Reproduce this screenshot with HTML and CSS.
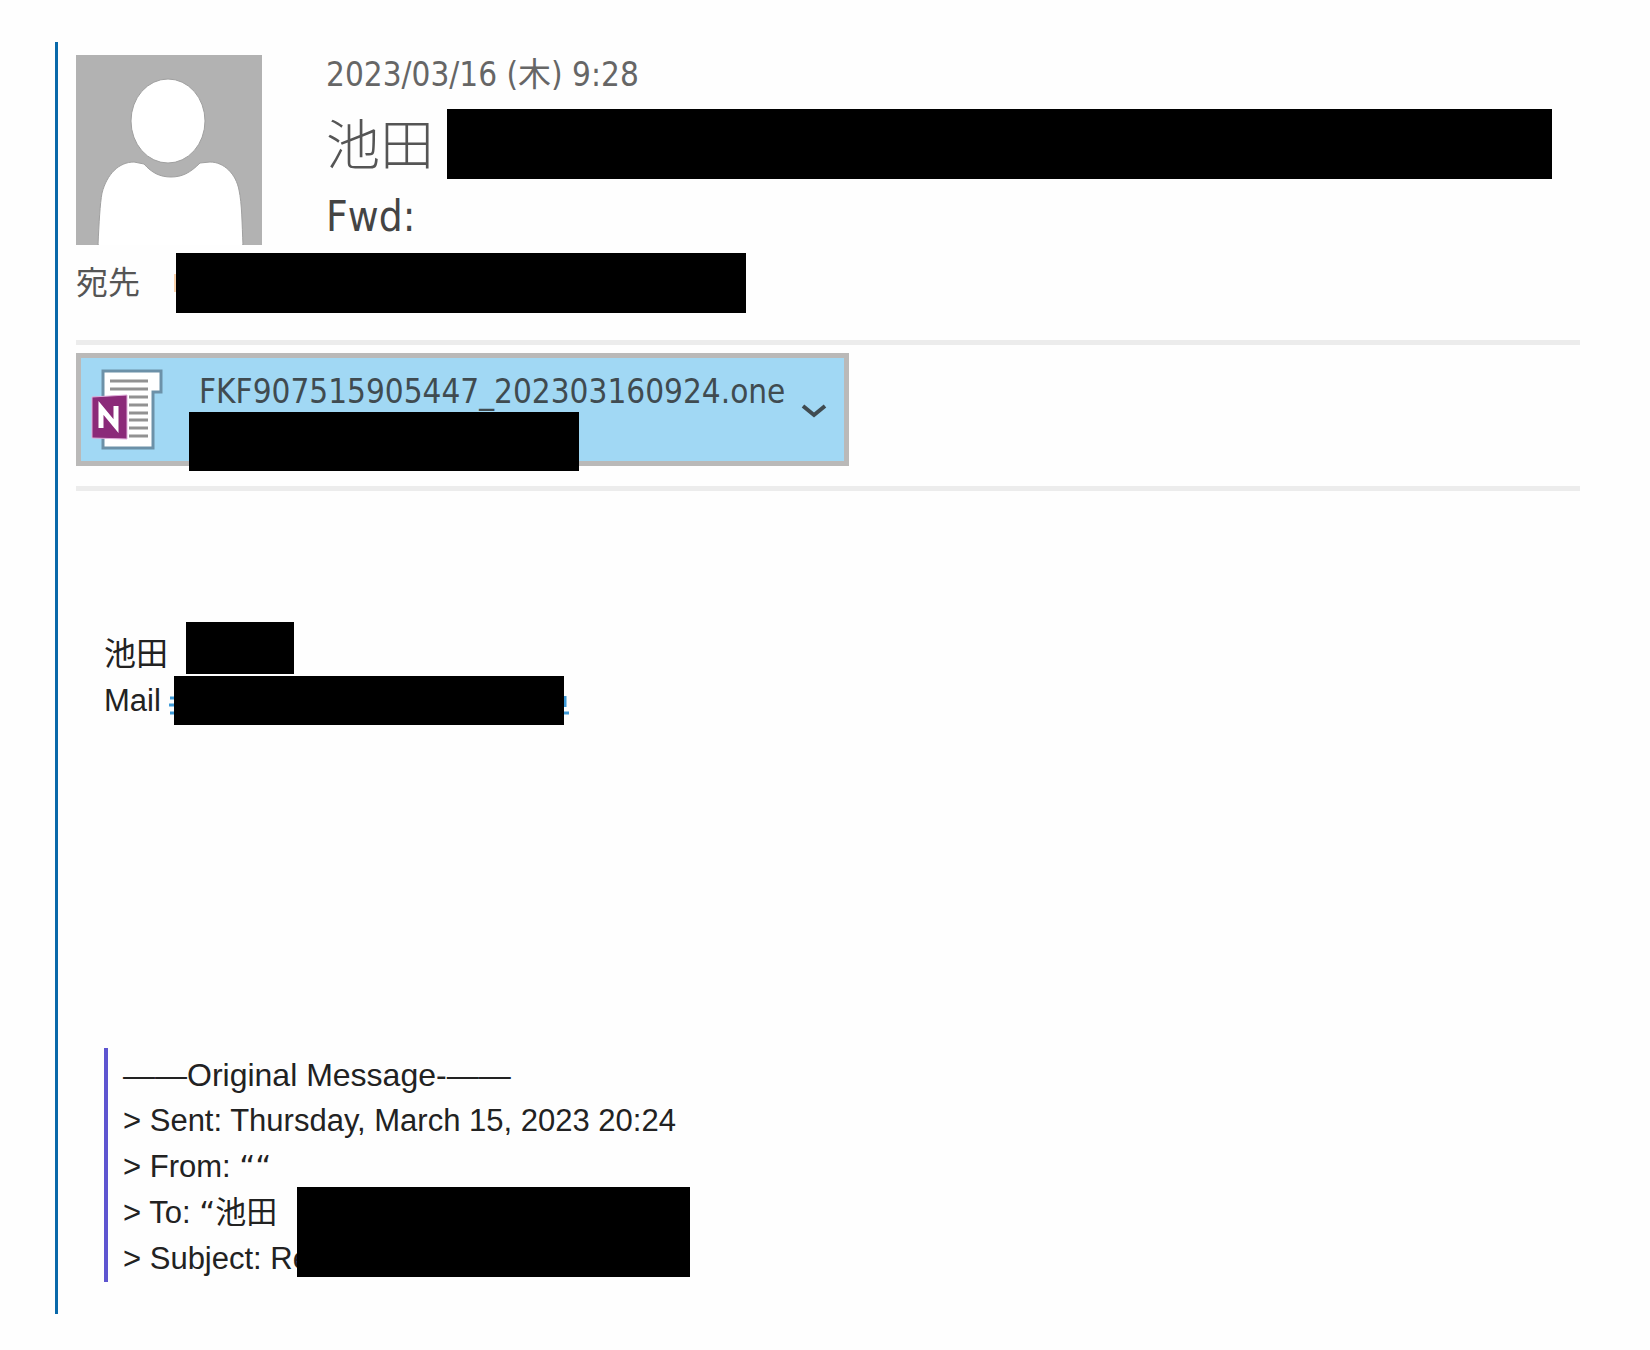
FILE: index.html
```html
<!DOCTYPE html>
<html lang="ja">
<head>
    <meta charset="UTF-8">
    <meta name="viewport" content="width=device-width, initial-scale=1.0">
    <title>Fwd:</title>
    <link rel="stylesheet" href="styles.css">
</head>
<body>
    <main class="message">
        <header class="header">
            <svg class="avatar" viewBox="0 0 186 190" role="img" aria-label="池田">
                <rect width="186" height="190" fill="#b2b2b2"/>
                <ellipse cx="92" cy="66" rx="37" ry="42" fill="#fff" stroke="#a0a0a0"/>
                <path d="M22 190C23 168 24 149 26 138C31 119 43 107 58 107L68 109C76 118 84 122 95 122C106 122 114 118 124 108L134 107C148 107 160 119 163 135C166 149 166 169 167 190Z" fill="#fff" stroke="#a0a0a0"/>
                <path d="M23 189H166V190H23Z" fill="#fff"/>
            </svg>
            <div class="summary">
                <time class="date" datetime="2023-03-16T09:28">2023/03/16 (木) 9:28</time>
                <div class="sender">
                    <span class="sender-name">池田</span>
                    <span class="redacted"></span>
                </div>
                <h1 class="subject">Fwd:</h1>
            </div>
        </header>
        <div class="recipient">
            <span class="label">宛先</span>
            <svg class="recipient-start" viewBox="0 0 2 18" aria-hidden="true">
                <path d="M1 0V18" stroke="#fad2ac" stroke-width="2"/>
            </svg>
            <span class="redacted"></span>
        </div>

        <div class="attachments">
            <button class="attachment" type="button">
                <svg class="file-icon" viewBox="0 0 72 82" aria-hidden="true">
                    <path d="M12 3H70V24H62V80H12Z" fill="#fff" stroke="#6c91a8" stroke-width="3"/>
                    <path d="M19 13H57M19 21H57M38 29H57M38 37H57M38 45H57M38 52H57M38 60H57M38 68H57" stroke="#929292" stroke-width="3"/>
                    <path d="M1 29L36 27V71L1 70Z" fill="#8b2a79" stroke="#e0aedb"/>
                    <path d="M10 60V40L25 58V38" fill="none" stroke="#fff" stroke-width="5"/>
                </svg>
                <span class="file-name">FKF907515905447_202303160924.one</span>
                <svg class="chevron" viewBox="0 0 26 16" aria-hidden="true">
                    <path d="M2 3L13 12L24 3" fill="none" stroke="#404b50" stroke-width="4"/>
                </svg>
                <span class="redacted"></span>
            </button>
        </div>

        <section class="content">
            <div class="signature">
                <div class="signature-name">
                    <span>池田</span>
                    <span class="redacted"></span>
                </div>
                <div class="signature-mail">
                    <span>Mail</span>
                    <a class="mail-link" href="#" aria-label="Mail">
                        <svg class="link-part" viewBox="0 0 5 22" aria-hidden="true">
                            <path d="M1 3H5M0 10H5M1 18H5" stroke="#3d9ad8" stroke-width="3"/>
                        </svg>
                        <span class="redacted"></span>
                        <svg class="link-part" viewBox="0 0 5 22" aria-hidden="true">
                            <path d="M1 1V12M0 18H5" fill="none" stroke="#3d9ad8" stroke-width="3"/>
                        </svg>
                    </a>
                </div>
            </div>

            <blockquote class="quote">
                <p class="quote-title">——Original Message-——</p>
                <p>&gt; Sent: Thursday, March 15, 2023 20:24</p>
                <p>&gt; From: <span class="mark">““</span></p>
                <p>&gt; To: <span class="mark">“</span>池田</p>
                <p>&gt; Subject: Re</p>
                <span class="redacted"></span>
            </blockquote>
        </section>
    </main>
</body>
</html>
```

FILE: styles.css
```css
* {
    box-sizing: border-box;
}
body {
    font-family: "DejaVu Sans Condensed", "Noto Sans CJK JP", sans-serif;
    margin: 0;
    background-color: #fefefe;
    color: #555;
}
h1, p {
    margin: 0;
    font-weight: normal;
}
.message {
    margin: 42px 70px 36px 55px;
    padding: 13px 0 32px 18px;
    border-left: 3px solid #0969aa;
}
.redacted {
    display: block;
    flex: none;
    background-color: #000;
}

/* Header */
.header {
    display: flex;
    gap: 64px;
}
.avatar {
    flex: none;
    width: 186px;
    height: 190px;
}
.summary {
    flex: 1;
}
.date {
    display: block;
    font-size: 33px;
    line-height: 40px;
    color: #666;
}
.sender {
    display: flex;
    align-items: center;
    height: 70px;
    margin-top: 14px;
}
.sender-name {
    width: 121px;
    padding-bottom: 4px;
    font-family: "Noto Sans CJK JP", sans-serif;
    font-size: 54px;
    font-weight: 300;
    line-height: 66px;
}
.sender .redacted {
    flex: 1;
    height: 70px;
    margin-right: 28px;
}
.subject {
    font-size: 42px;
    line-height: 56px;
    margin-top: 10px;
    color: #444;
}
.recipient {
    display: flex;
    align-items: center;
    height: 60px;
    margin: 8px 0 27px;
}
.recipient .label {
    width: 98px;
    font-size: 32px;
    line-height: 48px;
}
.recipient .redacted {
    width: 570px;
    height: 60px;
}
.recipient-start {
    width: 2px;
    height: 18px;
}

/* Attachments */
.attachments {
    padding: 8px 0 20px;
    border-top: 5px solid #ececec;
    border-bottom: 5px solid #ececec;
}
.attachment {
    position: relative;
    display: flex;
    align-items: flex-start;
    width: 773px;
    height: 113px;
    padding: 10px 17px 0 10px;
    border: 5px solid #bab9b8;
    background-color: #a1d8f4;
    color: #404b50;
    font-family: inherit;
    font-size: 33px;
    line-height: 48px;
    text-align: left;
}
.file-icon {
    flex: none;
    width: 72px;
    height: 82px;
}
.file-name {
    flex: 1;
    margin-left: 36px;
}
.chevron {
    flex: none;
    width: 26px;
    height: 16px;
    margin-top: 35px;
}
.attachment .redacted {
    position: absolute;
    left: 108px;
    top: 54px;
    width: 390px;
    height: 59px;
}

/* Body */
.content {
    padding: 131px 0 0 28px;
    font-family: "Liberation Sans", "Noto Sans CJK JP", sans-serif;
    font-size: 31px;
    line-height: 46px;
    color: #222;
}
.signature {
    display: flex;
    flex-direction: column;
    gap: 2px;
    margin-bottom: 323px;
}
.signature-name {
    display: flex;
    align-items: flex-end;
    gap: 18px;
    height: 52px;
    font-size: 32px;
    line-height: 40px;
}
.signature-name .redacted {
    width: 108px;
    height: 52px;
}
.signature-mail {
    display: flex;
    align-items: center;
    gap: 8px;
    height: 49px;
}
.mail-link {
    display: flex;
    align-items: center;
}
.mail-link .redacted {
    width: 390px;
    height: 49px;
}
.link-part {
    width: 5px;
    height: 22px;
    margin-top: 10px;
}
.quote {
    position: relative;
    margin: 0;
    padding: 4px 0 0 15px;
    border-left: 4px solid #5e55d0;
}
.quote-title {
    font-size: 32px;
}
.mark {
    font-family: "DejaVu Sans", sans-serif;
    line-height: 1;
}
.quote .redacted {
    position: absolute;
    left: 189px;
    top: 139px;
    width: 393px;
    height: 90px;
}
```
